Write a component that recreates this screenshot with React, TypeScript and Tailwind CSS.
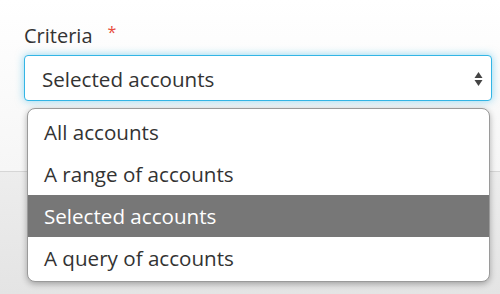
import { useState } from 'react';

const options = ['All accounts', 'A range of accounts', 'Selected accounts', 'A query of accounts'];

export default function App() {
  const [selected, setSelected] = useState('Selected accounts');

  return (
    <div className="relative w-[500px] h-[294px] overflow-hidden bg-white font-['Open_Sans',sans-serif] text-[#333]">
      <div className="h-[171px] bg-gradient-to-b from-white to-[#f6f6f6] px-6 pt-[22px]">
        <label className="flex items-center text-[20px] leading-7">
          Criteria
          <span className="ml-[15px] -mt-2 text-[16px] text-[#e74c3c]">*</span>
        </label>
        <div className="mt-[5px] flex h-[46px] w-[468px] items-center justify-between rounded-[4px] border border-[#33b5e5] bg-white pl-[17px] pr-[8px] pt-[2px] shadow-[0_0_8px_rgba(51,181,229,0.55)]">
          <span className="text-[20.6px]">{selected}</span>
          <svg width="9" height="16" viewBox="0 0 9 16">
            <path d="M4.5 1 L8.5 7 L0.5 7 Z" fill="#444" />
            <path d="M4.5 15 L8.5 9 L0.5 9 Z" fill="#444" />
          </svg>
        </div>
      </div>
      <div className="h-[123px] border-t border-[#d6d6d6] bg-gradient-to-b from-[#ededed] to-[#e4e4e4]" />

      <ul className="absolute left-[27px] top-[108px] w-[463px] overflow-hidden rounded-[8px] border border-[#9a9a9a] bg-white py-[2px] shadow-[0_2px_6px_rgba(0,0,0,0.3)]">
        {options.map((o) => (
          <li
            key={o}
            onClick={() => setSelected(o)}
            className={`flex h-[42px] items-center px-4 pt-[1px] text-[20.6px] ${
              o === selected ? 'bg-[#777] text-white' : 'text-[#333]'
            }`}
          >
            {o}
          </li>
        ))}
      </ul>
    </div>
  );
}
